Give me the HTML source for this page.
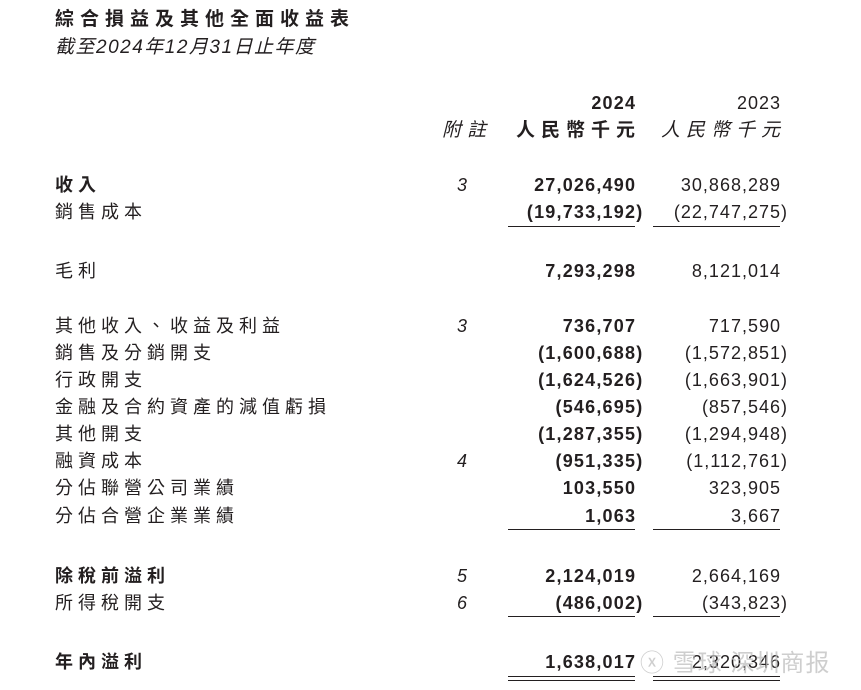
<!DOCTYPE html>
<html><head><meta charset="utf-8"><style>
body{margin:0;width:861px;height:690px;background:#fff;overflow:hidden;position:relative;color:#231f20;font-family:"Liberation Sans","Noto Sans CJK TC",sans-serif;}
.a{position:absolute;white-space:nowrap;line-height:20px;font-size:18px;}
.l{left:55px;letter-spacing:5px;}
.n{left:452px;width:20px;text-align:center;font-style:italic;}
.c1{right:226px;text-align:right;letter-spacing:1.2px;margin-right:-1.2px;}
.c2{right:81px;text-align:right;letter-spacing:1px;margin-right:-1px;}
.b{font-weight:bold;}
.p{display:inline-block;width:0;}
.h{position:absolute;height:0;border-top:1.3px solid #231f20;}
</style></head><body>
<div class="a b" style="left:55px;top:10px;letter-spacing:6px;font-size:19px">綜合損益及其他全面收益表</div>
<div class="a" style="left:55px;top:38px;font-style:italic;letter-spacing:1.5px;font-size:19px">截至2024年12月31日止年度</div>

<div class="a b c1" style="top:93px">2024</div>
<div class="a c2" style="top:93px">2023</div>
<div class="a" style="left:442px;top:121px;font-style:italic;letter-spacing:6px;font-size:19px">附註</div>
<div class="a b c1" style="top:121px;letter-spacing:6px;margin-right:-6px;font-size:19px">人民幣千元</div>
<div class="a c2" style="top:121px;letter-spacing:6px;margin-right:-6px;font-style:italic;font-size:19px">人民幣千元</div>

<div class="a l b" style="top:175px">收入</div><div class="a n" style="top:175px">3</div>
<div class="a b c1" style="top:175px">27,026,490</div><div class="a c2" style="top:175px">30,868,289</div>
<div class="a l" style="top:202px">銷售成本</div>
<div class="a b c1" style="top:202px">(19,733,192<span class="p">)</span></div><div class="a c2" style="top:202px">(22,747,275<span class="p">)</span></div>
<div class="h" style="left:508px;width:127px;top:226px"></div><div class="h" style="left:653px;width:127px;top:226px"></div>

<div class="a l" style="top:261px">毛利</div>
<div class="a b c1" style="top:261px">7,293,298</div><div class="a c2" style="top:261px">8,121,014</div>

<div class="a l" style="top:316px">其他收入、收益及利益</div><div class="a n" style="top:316px">3</div>
<div class="a b c1" style="top:316px">736,707</div><div class="a c2" style="top:316px">717,590</div>
<div class="a l" style="top:343px">銷售及分銷開支</div>
<div class="a b c1" style="top:343px">(1,600,688<span class="p">)</span></div><div class="a c2" style="top:343px">(1,572,851<span class="p">)</span></div>
<div class="a l" style="top:370px">行政開支</div>
<div class="a b c1" style="top:370px">(1,624,526<span class="p">)</span></div><div class="a c2" style="top:370px">(1,663,901<span class="p">)</span></div>
<div class="a l" style="top:397px">金融及合約資產的減值虧損</div>
<div class="a b c1" style="top:397px">(546,695<span class="p">)</span></div><div class="a c2" style="top:397px">(857,546<span class="p">)</span></div>
<div class="a l" style="top:424px">其他開支</div>
<div class="a b c1" style="top:424px">(1,287,355<span class="p">)</span></div><div class="a c2" style="top:424px">(1,294,948<span class="p">)</span></div>
<div class="a l" style="top:451px">融資成本</div><div class="a n" style="top:451px">4</div>
<div class="a b c1" style="top:451px">(951,335<span class="p">)</span></div><div class="a c2" style="top:451px">(1,112,761<span class="p">)</span></div>
<div class="a l" style="top:478px">分佔聯營公司業績</div>
<div class="a b c1" style="top:478px">103,550</div><div class="a c2" style="top:478px">323,905</div>
<div class="a l" style="top:506px">分佔合營企業業績</div>
<div class="a b c1" style="top:506px">1,063</div><div class="a c2" style="top:506px">3,667</div>
<div class="h" style="left:508px;width:127px;top:529px"></div><div class="h" style="left:653px;width:127px;top:529px"></div>

<div class="a l b" style="top:566px">除稅前溢利</div><div class="a n" style="top:566px">5</div>
<div class="a b c1" style="top:566px">2,124,019</div><div class="a c2" style="top:566px">2,664,169</div>
<div class="a l" style="top:593px">所得稅開支</div><div class="a n" style="top:593px">6</div>
<div class="a b c1" style="top:593px">(486,002<span class="p">)</span></div><div class="a c2" style="top:593px">(343,823<span class="p">)</span></div>
<div class="h" style="left:508px;width:127px;top:616px"></div><div class="h" style="left:653px;width:127px;top:616px"></div>

<div class="a l b" style="top:652px">年內溢利</div>
<div class="a b c1" style="top:652px">1,638,017</div><div class="a c2" style="top:652px">2,320,346</div>
<div class="h" style="left:508px;width:127px;top:676px"></div><div class="h" style="left:653px;width:127px;top:676px"></div>
<div class="h" style="left:508px;width:127px;top:680px"></div><div class="h" style="left:653px;width:127px;top:680px"></div>
<div class="a" style="left:640px;top:650px;font-size:24px;line-height:28px;color:rgba(190,190,190,0.75);letter-spacing:1px">ⓧ 雪球 深圳商报</div>
</body></html>
